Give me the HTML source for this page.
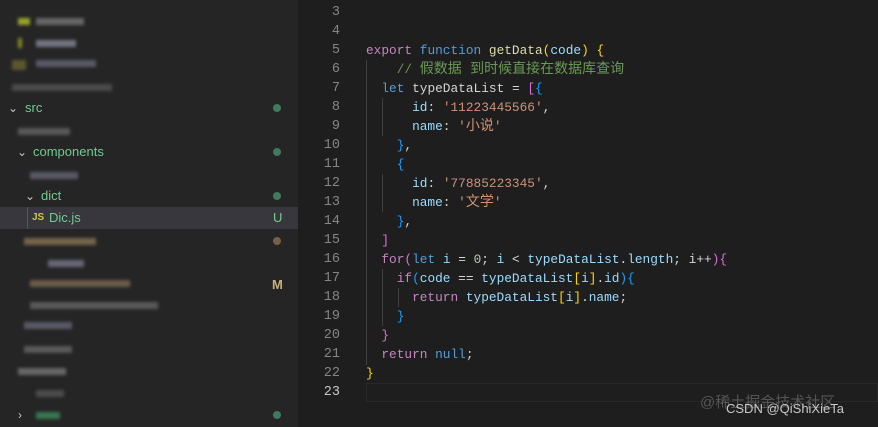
<!DOCTYPE html><html><head><style>
body{margin:0;width:878px;height:427px;background:#1e1e1e;overflow:hidden;position:relative;font-family:"Liberation Sans",sans-serif}
#side{position:absolute;left:0;top:0;width:298px;height:427px;background:#252526}
.r{position:absolute;left:0;width:298px;height:22px;line-height:22px;font-size:13px;color:#73c991}
.dot{position:absolute;left:273px;top:7px;width:8px;height:8px;border-radius:50%;background:#3f7a5e}
.b{position:absolute;height:7px;filter:blur(1.5px);opacity:.8}
.ch{position:absolute;font-size:12px;color:#c5c5c5}
.code{position:absolute;left:300px;top:0;width:578px;font-family:"Liberation Mono","Noto Sans CJK SC",monospace;font-size:12.8px}
.l{position:absolute;left:0;height:19px;line-height:19px;white-space:pre;width:578px}
.n{position:absolute;right:538px;color:#858585;text-align:right;font-size:13.5px}
.c{position:absolute;left:66px;color:#9cdcfe}
.k{color:#569cd6}.p{color:#c586c0}.f{color:#dcdcaa}.s{color:#ce9178}.cm{color:#6a9955}.w{color:#d4d4d4}.y{color:#ffd700}.v{color:#da70d6}.bl{color:#179fff}.nu{color:#b5cea8}
.z{font-size:14px}
.g{position:absolute;width:1px;background:#404040}
</style></head><body>
<div id="side">
<div class="b" style="left:18px;top:18px;width:12px;background:#b5c22a"></div><div class="b" style="left:36px;top:18px;width:48px;background:#777"></div>
<div class="b" style="left:18px;top:38px;width:4px;height:10px;background:#a0a020"></div><div class="b" style="left:36px;top:40px;width:40px;background:#889"></div>
<div class="b" style="left:12px;top:60px;width:14px;height:10px;background:#6a6430"></div><div class="b" style="left:36px;top:60px;width:60px;background:#667"></div>
<div class="b" style="left:12px;top:84px;width:100px;background:#555"></div>
<div class="r" style="top:97px"><span class="ch" style="left:8px">&#8964;</span><span style="position:absolute;left:25px">src</span><div class="dot"></div></div>
<div class="b" style="left:18px;top:128px;width:52px;background:#666"></div>
<div class="r" style="top:141px"><span class="ch" style="left:17px">&#8964;</span><span style="position:absolute;left:33px">components</span><div class="dot"></div></div>
<div class="b" style="left:30px;top:172px;width:48px;background:#667"></div>
<div class="r" style="top:185px"><span class="ch" style="left:25px">&#8964;</span><span style="position:absolute;left:41px">dict</span><div class="dot"></div></div>
<div class="r" style="top:207px;background:#37373d;color:#73c991"><div style="position:absolute;left:27px;top:0;width:1px;height:22px;background:#585858"></div><span style="position:absolute;left:32px;font-size:10px;font-weight:bold;color:#cbcb41">JS</span><span style="position:absolute;left:49px">Dic.js</span><span style="position:absolute;left:273px;color:#73c991">U</span></div>
<div class="b" style="left:24px;top:238px;width:72px;background:#8a7555"></div><div class="dot" style="top:237px;background:#7a5e48"></div>
<div class="b" style="left:48px;top:260px;width:36px;background:#778"></div>
<div class="b" style="left:30px;top:280px;width:100px;background:#7a6a50"></div><span style="position:absolute;left:272px;top:277px;font-size:13px;font-weight:bold;color:#c9b178">M</span>
<div class="b" style="left:30px;top:302px;width:128px;background:#666"></div>
<div class="b" style="left:24px;top:322px;width:48px;background:#667"></div>
<div class="b" style="left:24px;top:346px;width:48px;background:#666"></div>
<div class="b" style="left:18px;top:368px;width:48px;background:#777"></div>
<div class="b" style="left:36px;top:390px;width:28px;background:#555"></div>
<div class="r" style="top:404px"><span class="ch" style="left:18px">&#8250;</span><div class="b" style="left:36px;top:8px;width:24px;background:#3f8a5e"></div><div class="dot"></div></div>
</div>
<div class="code">
<div style="position:absolute;left:66px;top:383px;width:512px;height:19px;border:1px solid #282828;box-sizing:border-box"></div>
<div class="g" style="top:60px;height:305px;left:66px"></div>
<div class="g" style="left:82px;top:98px;height:38px"></div>
<div class="g" style="left:82px;top:174px;height:38px"></div>
<div class="g" style="left:82px;top:269px;height:57px"></div>
<div class="g" style="left:98px;top:288px;height:19px"></div>
</div>
<div class="code">
<div class="l" style="top:3px"><span class="n">3</span></div>
<div class="l" style="top:22px"><span class="n">4</span></div>
<div class="l" style="top:41px"><span class="n">5</span><span class="c"><span class="p">export</span> <span class="k">function</span> <span class="f">getData</span><span class="y">(</span>code<span class="y">)</span> <span class="y">{</span></span></div>
<div class="l" style="top:60px"><span class="n">6</span><span class="c">    <span class="cm">// <span class="z">假数据 到时候直接在数据库查询</span></span></span></div>
<div class="l" style="top:79px"><span class="n">7</span><span class="c">  <span class="k">let</span> <span class="w">typeDataList</span> <span class="w">=</span> <span class="v">[</span><span class="bl">{</span></span></div>
<div class="l" style="top:98px"><span class="n">8</span><span class="c">      id<span class="w">:</span> <span class="s">'11223445566'</span><span class="w">,</span></span></div>
<div class="l" style="top:117px"><span class="n">9</span><span class="c">      name<span class="w">:</span> <span class="s">'<span class="z">小说</span>'</span></span></div>
<div class="l" style="top:136px"><span class="n">10</span><span class="c">    <span class="bl">}</span><span class="w">,</span></span></div>
<div class="l" style="top:155px"><span class="n">11</span><span class="c">    <span class="bl">{</span></span></div>
<div class="l" style="top:174px"><span class="n">12</span><span class="c">      id<span class="w">:</span> <span class="s">'77885223345'</span><span class="w">,</span></span></div>
<div class="l" style="top:193px"><span class="n">13</span><span class="c">      name<span class="w">:</span> <span class="s">'<span class="z">文学</span>'</span></span></div>
<div class="l" style="top:212px"><span class="n">14</span><span class="c">    <span class="bl">}</span><span class="w">,</span></span></div>
<div class="l" style="top:231px"><span class="n">15</span><span class="c">  <span class="v">]</span></span></div>
<div class="l" style="top:250px"><span class="n">16</span><span class="c">  <span class="p">for</span><span class="v">(</span><span class="k">let</span> i <span class="w">=</span> <span class="nu">0</span><span class="w">;</span> i <span class="w">&lt;</span> typeDataList<span class="w">.</span>length<span class="w">;</span> <span class="w">i++</span><span class="v">){</span></span></div>
<div class="l" style="top:269px"><span class="n">17</span><span class="c">    <span class="p">if</span><span class="bl">(</span>code <span class="w">==</span> typeDataList<span class="y">[</span>i<span class="y">]</span><span class="w">.</span>id<span class="bl">){</span></span></div>
<div class="l" style="top:288px"><span class="n">18</span><span class="c">      <span class="p">return</span> typeDataList<span class="y">[</span>i<span class="y">]</span><span class="w">.</span>name<span class="w">;</span></span></div>
<div class="l" style="top:307px"><span class="n">19</span><span class="c">    <span class="bl">}</span></span></div>
<div class="l" style="top:326px"><span class="n">20</span><span class="c">  <span class="v">}</span></span></div>
<div class="l" style="top:345px"><span class="n">21</span><span class="c">  <span class="p">return</span> <span class="k">null</span><span class="w">;</span></span></div>
<div class="l" style="top:364px"><span class="n">22</span><span class="c"><span class="y">}</span></span></div>
<div class="l" style="top:383px"><span class="n" style="color:#c6c6c6">23</span></div>
</div>
<div style="position:absolute;left:700px;top:391px;font-size:15px;color:#555;font-family:'Liberation Sans','Noto Sans CJK SC',sans-serif">@稀土掘金技术社区</div>
<div style="position:absolute;left:726px;top:401px;font-size:13px;color:#c8c8c8;font-family:'Liberation Sans',sans-serif">CSDN @QiShiXieTa</div>
</body></html>
